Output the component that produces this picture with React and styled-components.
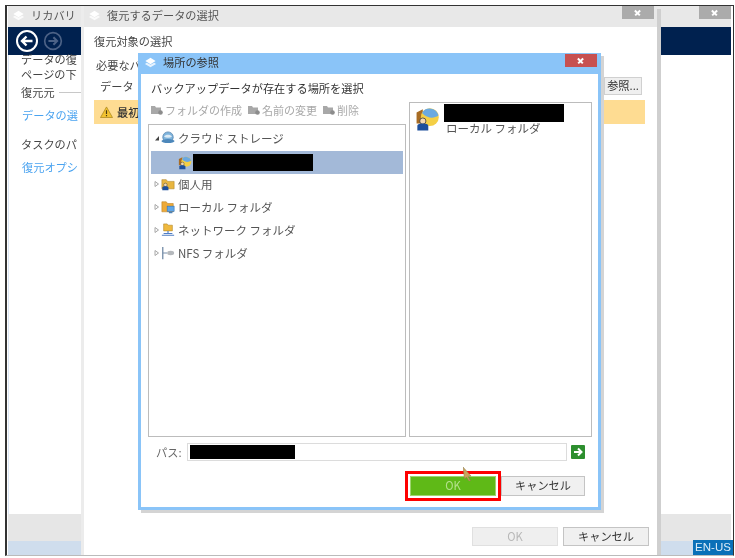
import styled, { createGlobalStyle } from "styled-components";

const GlobalStyle = createGlobalStyle`
  html, body { margin: 0; padding: 0; background: #fff; overflow: hidden; }
  * { box-sizing: border-box; }
`;

const LayersIcon = ({ size = 13 }) => (
  <svg width={size} height={size} viewBox="0 0 14 14">
    <path d="M1 8.500 7 12l6-3.500-2-1.200L7 9.500 3 7.300z" fill="#fff" opacity="0.8" />
    <path d="M7 2 1.500 5.500 7 9l5.500-3.500z" fill="#fff" />
  </svg>
);

const NavArrow = ({ dim }) => (
  <svg width={dim ? 20 : 24} height={dim ? 20 : 24} viewBox="0 0 24 24" fill="none">
    <circle cx="12" cy="12" r="10" stroke={dim ? "#4c6286" : "#fff"} strokeWidth="2" />
    <path
      d={dim ? "M6.500 12h10M12.500 7.500l4.500 4.500-4.500 4.500" : "M17.500 12h-10M11.500 7.500 7 12l4.500 4.500"}
      stroke={dim ? "#4c6286" : "#fff"}
      strokeWidth="2.400"
    />
  </svg>
);

const WarnIcon = () => (
  <svg width="13" height="12" viewBox="0 0 14 13">
    <path d="M7 1 13.500 12.500H.5z" fill="#f2c230" stroke="#a8861c" strokeWidth="0.800" />
    <path d="M7 4.500v4.200M7 9.800v1.300" stroke="#4a3a10" strokeWidth="1.300" />
  </svg>
);

const ToolIcon = () => (
  <svg width="12" height="11" viewBox="0 0 12 11">
    <path d="M0 2h4l1 1.500h5V10H0z" fill="#a8a8a8" />
    <circle cx="9.500" cy="8.500" r="2.300" fill="#8c8c8c" />
  </svg>
);

const Person = () => (
  <>
    <circle cx="5" cy="9" r="2" fill="#f4d9b0" stroke="#333" strokeWidth="0.500" />
    <path d="M1.500 15v-3c0-1 1.500-1.500 3.500-1.500s3.500.5 3.500 1.500v3z" fill="#1c4f9c" />
  </>
);

const CloudIcon = () => (
  <svg width="14" height="14" viewBox="0 0 16 16">
    <circle cx="8" cy="7" r="6" fill="#7fb4dc" stroke="#3b6f9e" strokeWidth="0.700" />
    <path d="M3.500 6.500C5 3.500 11 3.500 12.500 6.500 10 8 6 8 3.500 6.500z" fill="#dcebf5" />
    <ellipse cx="8" cy="11.500" rx="7.500" ry="2.300" fill="#4c87ba" />
  </svg>
);

const AccountIcon = ({ size = 14 }) => (
  <svg width={size} height={size} viewBox="0 0 16 16">
    <path d="M1 3.500 5 1.500v9H1z" fill="#a86c24" />
    <circle cx="9.500" cy="6.500" r="5.700" fill="#f4cf45" />
    <path d="M4.500 3.800A5.700 5.700 0 0 1 15 5.500C12 7.500 8 7.500 4.500 3.800z" fill="#6aa9e0" />
    <Person />
  </svg>
);

const PersonalIcon = () => (
  <svg width="14" height="14" viewBox="0 0 16 16">
    <path d="M1 3h5l1.500 2H15v8.500H1z" fill="#e8b640" stroke="#a87c1c" strokeWidth="0.600" />
    <Person />
  </svg>
);

const LocalIcon = () => (
  <svg width="14" height="14" viewBox="0 0 16 16">
    <path d="M1 2h5l1.500 2H14v9.500H1z" fill="#eeaa38" stroke="#b77a1c" strokeWidth="0.600" />
    <rect x="7" y="7" width="8" height="6" fill="#5ea6e8" stroke="#2c6cb0" strokeWidth="0.600" />
    <path d="M9 14.500h4" stroke="#2c6cb0" strokeWidth="1.200" />
  </svg>
);

const NetworkIcon = () => (
  <svg width="14" height="14" viewBox="0 0 16 16">
    <path d="M3 1h4l1 1.500h5V9H3z" fill="#efb93f" stroke="#a87c1c" strokeWidth="0.600" />
    <path d="M8 9v3M1 14h14M3 12h10" stroke="#4e7cc4" strokeWidth="1.300" />
  </svg>
);

const NfsIcon = () => (
  <svg width="14" height="14" viewBox="0 0 16 16">
    <path d="M2 1v14" stroke="#7c93ad" strokeWidth="1.600" />
    <path d="M2 8h5" stroke="#7c93ad" strokeWidth="1.200" />
    <ellipse cx="11" cy="8" rx="4" ry="2.500" fill="#b5b9bd" />
  </svg>
);

const GoIcon = () => (
  <svg width="14" height="14" viewBox="0 0 14 14">
    <rect width="14" height="14" rx="1" fill="#2d8f2f" />
    <path d="M3 7h7M7 3.500 10.500 7 7 10.500" stroke="#fff" strokeWidth="2" fill="none" />
  </svg>
);

const PointerIcon = () => (
  <svg width="9" height="14" viewBox="0 0 9 14">
    <path d="M0 0 8 9 5 9.500 7.500 14 6 14 3.500 10 1.500 12z" fill="#c9a45c" stroke="#8c7a50" strokeWidth="0.500" />
  </svg>
);

const Arrow = ({ open }) => (
  <svg width="7" height="8" viewBox="0 0 7 8">
    {open ? (
      <path d="M5 2v4.500H1z" fill="#444" />
    ) : (
      <path d="M1 1.500v5L4.500 4z" fill="#fff" stroke="#a6a6a6" />
    )}
  </svg>
);

const treeRows = [
  { label: "個人用", icon: <PersonalIcon /> },
  { label: "ローカル フォルダ", icon: <LocalIcon /> },
  { label: "ネットワーク フォルダ", icon: <NetworkIcon /> },
  { label: "NFS フォルダ", icon: <NfsIcon /> },
];

export default function App() {
  return (
    <Page>
      <GlobalStyle />
      <MainWindow>
        <TitleBar>
          <LayersIcon />
          <TitleText>リカバリ</TitleText>
          <CloseButton $edge />
        </TitleBar>
        <NavBar>
          <NavArrow />
          <NavArrow dim />
        </NavBar>
        <MainBody>
          <LeftColumn>
            <Intro>
              データの復<br />
              ページの下
            </Intro>
            <SourceLine>復元元</SourceLine>
            <LinkText>データの選</LinkText>
            <TaskLabel>タスクのパ</TaskLabel>
            <LinkText>復元オプシ</LinkText>
          </LeftColumn>
        </MainBody>
        <MainFooter />
        <StatusStrip />
        <LangBadge>EN-US</LangBadge>

        <RestoreWindow>
          <TitleBar>
            <LayersIcon />
            <TitleText>復元するデータの選択</TitleText>
            <CloseButton />
          </TitleBar>
          <RestoreBody>
            <Heading>復元対象の選択</Heading>
            <NeedLine>必要なバ</NeedLine>
            <DataRow>
              <span>データ</span>
              <BrowseButton>参照...</BrowseButton>
            </DataRow>
            <WarnBar>
              <WarnIcon />
              <span>最初</span>
            </WarnBar>
            <RestoreActions>
              <DialogButton disabled>OK</DialogButton>
              <DialogButton>キャンセル</DialogButton>
            </RestoreActions>
          </RestoreBody>

          <BrowseDialog>
            <DialogTitle>
              <LayersIcon />
              <TitleText $dark>場所の参照</TitleText>
              <CloseButton $red />
            </DialogTitle>
            <DialogBody>
              <Panels>
                <LeftStack>
                  <Prompt>バックアップデータが存在する場所を選択</Prompt>
                  <Toolbar>
                    <ToolItem><ToolIcon />フォルダの作成</ToolItem>
                    <ToolItem><ToolIcon />名前の変更</ToolItem>
                    <ToolItem><ToolIcon />削除</ToolItem>
                  </Toolbar>
                  <TreePanel>
                    <TreeRow>
                      <Arrow open />
                      <CloudIcon />
                      <RowLabel>クラウド ストレージ</RowLabel>
                    </TreeRow>
                    <TreeRow $selected>
                      <AccountIcon />
                      <Redacted $w={120} $h={17} />
                    </TreeRow>
                    {treeRows.map((row) => (
                      <TreeRow key={row.label}>
                        <Arrow />
                        {row.icon}
                        <RowLabel>{row.label}</RowLabel>
                      </TreeRow>
                    ))}
                  </TreePanel>
                </LeftStack>
                <ContentPanel>
                  <AccountIcon size={25} />
                  <ContentText>
                    <Redacted $w={120} $h={18} />
                    <ContentLabel>ローカル フォルダ</ContentLabel>
                  </ContentText>
                </ContentPanel>
              </Panels>
              <PathRow>
                <PathLabel>パス:</PathLabel>
                <PathInput>
                  <Redacted $w={105} $h={14} />
                </PathInput>
                <GoIcon />
              </PathRow>
              <DialogActions>
                <PointerSpot><PointerIcon /></PointerSpot>
                <PrimaryButton>OK</PrimaryButton>
                <DialogButton>キャンセル</DialogButton>
              </DialogActions>
            </DialogBody>
          </BrowseDialog>
        </RestoreWindow>
      </MainWindow>
    </Page>
  );
}

const Page = styled.div`
  width: 735px;
  height: 558px;
  padding: 5px 1px 2px 5px;
  background: #fff;
  font-family: "Noto Sans CJK JP", "Liberation Sans", sans-serif;
  font-size: 11.2px;
  color: #444;
  filter: blur(0.4px);
`;

const MainWindow = styled.div`
  position: relative;
  width: 729px;
  height: 551px;
  display: flex;
  flex-direction: column;
  padding: 0 2px 0 1px;
  border-top: 1px solid #333;
  border-left: 2px solid #333;
  border-right: 1px solid #333;
  border-bottom: 1px solid #bbb;
  overflow: hidden;
`;

const TitleBar = styled.div`
  height: 21px;
  flex: none;
  display: flex;
  align-items: center;
  gap: 6px;
  padding: 0 3px 3px 4px;
  background: #e8e8e8;
  position: relative;
`;

const TitleText = styled.span`
  font-size: 11.2px;
  line-height: 18px;
  color: ${(p) => (p.$dark ? "#333" : "#555")};
`;

const CloseButton = styled.div`
  position: absolute;
  top: ${(p) => (p.$red ? "1px" : "0")};
  right: ${(p) => (p.$red ? "1px" : p.$edge ? "0" : "3px")};
  width: 32px;
  height: 13px;
  background: ${(p) => (p.$red ? "#c75050" : "#ababab")};

  &::before,
  &::after {
    content: "";
    position: absolute;
    left: 12px;
    top: 6px;
    width: 7px;
    height: 1.500px;
    background: #fff;
    transform: rotate(45deg);
  }

  &::after {
    transform: rotate(-45deg);
  }
`;

const NavBar = styled.div`
  height: 28px;
  flex: none;
  display: flex;
  align-items: center;
  gap: 4px;
  padding-left: 7px;
  background: #00214f;
`;

const MainBody = styled.div`
  flex: 1;
  background: #fff;
  border-left: 1px solid #dbe6f5;
`;

const LeftColumn = styled.div`
  width: 73px;
  padding: 0 0 0 12px;
  white-space: nowrap;
`;

const Intro = styled.div`
  line-height: 15px;
  margin-top: -3px;
`;

const SourceLine = styled.div`
  display: flex;
  align-items: center;
  gap: 4px;
  margin-top: 1px;
  line-height: 18px;

  &::after {
    content: "";
    flex: 1;
    height: 1px;
    background: #c8c8c8;
  }
`;

const LinkText = styled.div`
  color: #4aa3f0;
  line-height: 18px;
  margin-top: 5px;
  padding-left: 1px;
`;

const TaskLabel = styled.div`
  line-height: 18px;
  margin-top: 11px;
  margin-bottom: 4px;
`;

const MainFooter = styled.div`
  height: 27px;
  flex: none;
  background: #e6e6e6;
`;

const StatusStrip = styled.div`
  height: 14px;
  flex: none;
  background: #cfdded;
`;

const LangBadge = styled.div`
  position: absolute;
  right: 0;
  bottom: 0;
  width: 40px;
  height: 15px;
  background: #0a70b8;
  color: #dcecf8;
  font-family: "Liberation Sans", sans-serif;
  font-size: 11.500px;
  line-height: 15px;
  text-align: center;
`;

const RestoreWindow = styled.div`
  position: absolute;
  left: 77px;
  top: 0;
  width: 573px;
  height: 550px;
  display: flex;
  flex-direction: column;
  background: #fff;
  box-shadow: 4px 3px 0 #cfcfcf, -3px 0 0 #ececec;
`;

const RestoreBody = styled.div`
  flex: 1;
  display: flex;
  flex-direction: column;
  padding: 5px 12px 10px 10px;
`;

const Heading = styled.div`
  line-height: 18px;
`;

const NeedLine = styled.div`
  margin: 6px 0 0 2px;
  line-height: 18px;
`;

const DataRow = styled.div`
  display: flex;
  justify-content: space-between;
  align-items: center;
  height: 19px;
  margin: 2px 3px 0 6px;
`;

const BrowseButton = styled.div`
  width: 38px;
  height: 18px;
  background: #efefef;
  border: 1px solid #d0d0d0;
  color: #333;
  line-height: 15px;
  text-align: center;
`;

const WarnBar = styled.div`
  display: flex;
  align-items: center;
  gap: 4px;
  height: 24px;
  margin-top: 5px;
  padding-left: 6px;
  background: #fedc92;
  color: #333;
  font-weight: 500;
`;

const RestoreActions = styled.div`
  margin-top: auto;
  margin-right: -4px;
  display: flex;
  justify-content: flex-end;
  gap: 5px;

  & > div {
    height: 19px;
    width: 86px;
  }
`;

const DialogButton = styled.div`
  width: 84px;
  height: 20px;
  background: ${(p) => (p.disabled ? "#efefef" : "#f0f0f0")};
  border: 1px solid ${(p) => (p.disabled ? "#e0e0e0" : "#c4c4c4")};
  color: ${(p) => (p.disabled ? "#b8b8b8" : "#333")};
  line-height: 17px;
  text-align: center;
`;

const BrowseDialog = styled.div`
  position: absolute;
  left: 54px;
  top: 47px;
  width: 463px;
  height: 457px;
  display: flex;
  flex-direction: column;
  background: #fff;
  border: 3px solid #8ac4f8;
  border-top: none;
  box-shadow: 3px 3px 0 #d4d4d4;
`;

const DialogTitle = styled(TitleBar)`
  height: 21px;
  padding: 0 0 3px 3px;
  background: #8ac4f8;
`;

const DialogBody = styled.div`
  flex: 1;
  display: flex;
  flex-direction: column;
  padding: 5px 9px 0 7px;
  position: relative;
`;

const Panels = styled.div`
  display: grid;
  grid-template-columns: 258px 183px;
  gap: 3px;
  height: 358px;
`;

const LeftStack = styled.div`
  display: flex;
  flex-direction: column;
  min-height: 0;
`;

const Prompt = styled.div`
  padding-left: 3px;
  line-height: 18px;
  color: #333;
`;

const Toolbar = styled.div`
  display: flex;
  gap: 6px;
  margin-top: 4px;
  padding-left: 3px;
  height: 17px;
  color: #a8a8a8;
  font-size: 11px;
`;

const ToolItem = styled.div`
  display: flex;
  align-items: center;
  gap: 2px;
`;

const TreePanel = styled.div`
  flex: 1;
  margin-top: 6px;
  padding: 3px 2px 0;
  border: 1px solid #bcbcbc;
`;

const TreeRow = styled.div`
  height: 23px;
  display: flex;
  align-items: center;
  gap: ${(p) => (p.$selected ? "1px" : "0")};
  padding: ${(p) => (p.$selected ? "0 0 0 27px" : "0 0 3px 3px")};
  background: ${(p) => (p.$selected ? "#a3b9d8" : "transparent")};
`;

const RowLabel = styled.span`
  margin-left: 3px;
  font-size: 11.500px;
  color: #555;
`;

const Redacted = styled.div`
  flex: none;
  width: ${(p) => p.$w}px;
  height: ${(p) => p.$h}px;
  background: #000;
`;

const ContentPanel = styled.div`
  display: flex;
  align-items: flex-start;
  gap: 4px;
  margin-top: 23px;
  padding: 1px 0 0 5px;
  border: 1px solid #bcbcbc;

  & > svg {
    margin-top: 3px;
  }
`;

const ContentText = styled.div`
  display: flex;
  flex-direction: column;
`;

const ContentLabel = styled.span`
  margin: -1px 0 0 2px;
  font-size: 11.500px;
  line-height: 15px;
  color: #555;
`;

const PathRow = styled.div`
  display: flex;
  align-items: center;
  height: 18px;
  margin-top: 6px;
`;

const PathLabel = styled.span`
  width: 39px;
  padding: 0 0 1px 8px;
  color: #666;
`;

const PathInput = styled.div`
  width: 380px;
  height: 18px;
  margin-right: 4px;
  padding: 1px 2px;
  background: #fff;
  border: 1px solid #dcdcdc;
`;

const DialogActions = styled.div`
  display: flex;
  justify-content: flex-end;
  gap: 5px;
  margin-top: 15px;
  padding-right: 4px;
  position: relative;
`;

const PrimaryButton = styled(DialogButton)`
  width: 86px;
  background: #5fb917;
  border: 1px solid #9ed46f;
  color: #b4e08c;
  outline: 3px solid #fe0000;
  outline-offset: 2px;
`;

const PointerSpot = styled.div`
  position: absolute;
  left: 315px;
  top: -9px;
  z-index: 1;
`;
